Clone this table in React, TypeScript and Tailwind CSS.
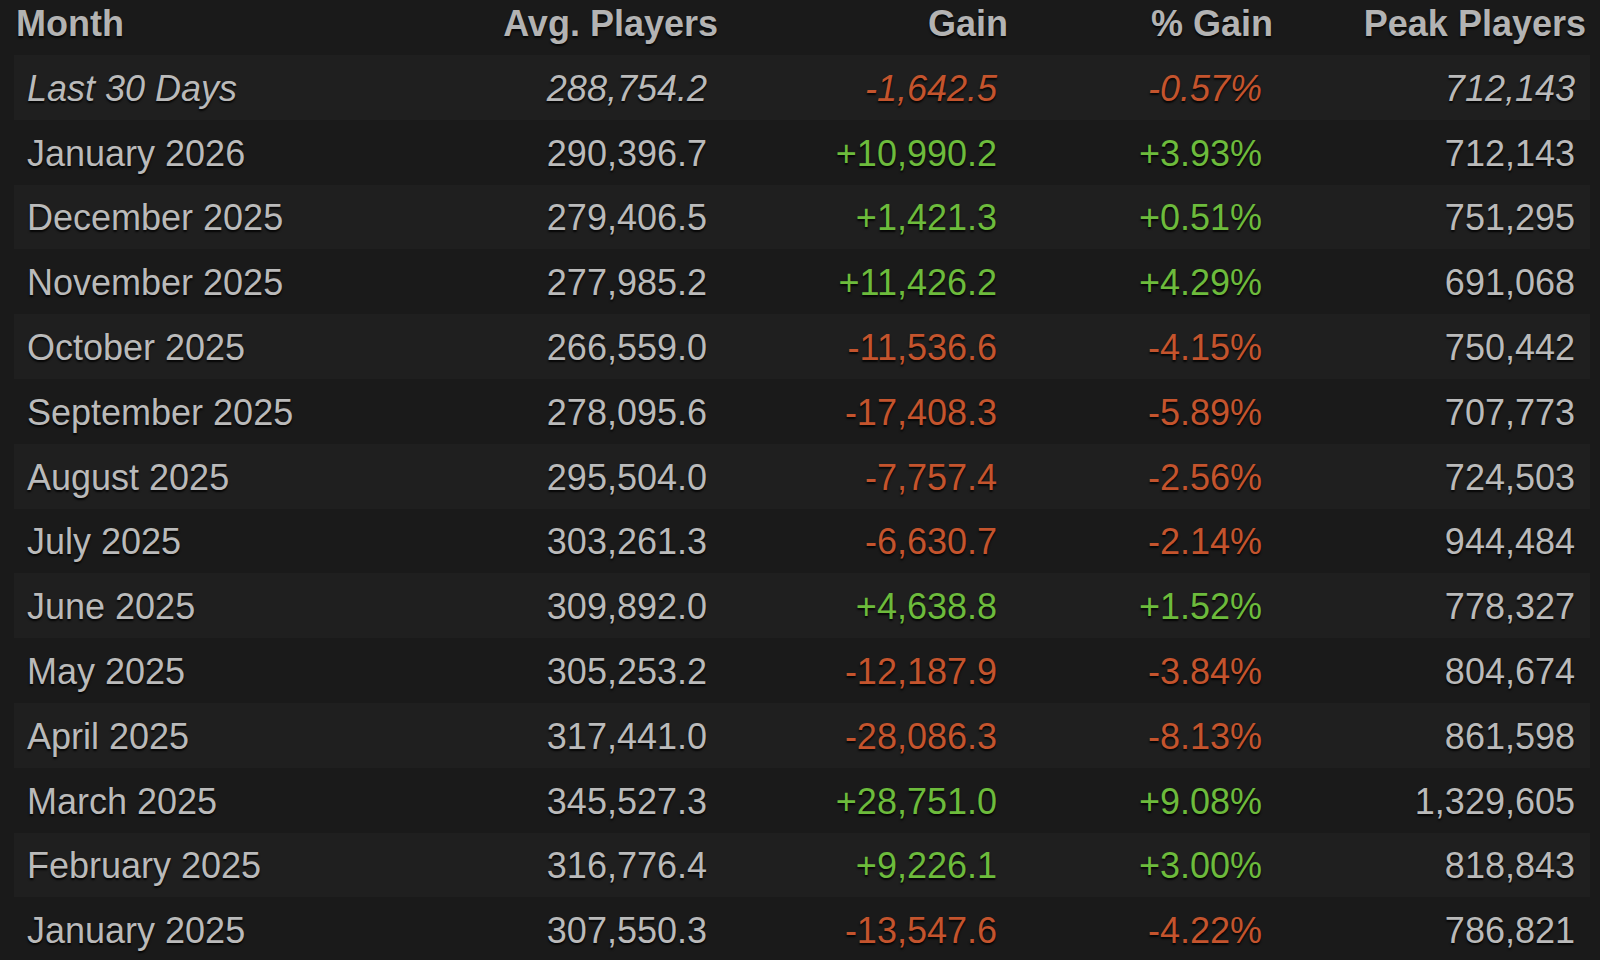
import React from "react";

type Row = { m: string; avg: string; gain: string; pct: string; peak: string };

const rows: Row[] = [
  { m: "Last 30 Days", avg: "288,754.2", gain: "-1,642.5", pct: "-0.57%", peak: "712,143" },
  { m: "January 2026", avg: "290,396.7", gain: "+10,990.2", pct: "+3.93%", peak: "712,143" },
  { m: "December 2025", avg: "279,406.5", gain: "+1,421.3", pct: "+0.51%", peak: "751,295" },
  { m: "November 2025", avg: "277,985.2", gain: "+11,426.2", pct: "+4.29%", peak: "691,068" },
  { m: "October 2025", avg: "266,559.0", gain: "-11,536.6", pct: "-4.15%", peak: "750,442" },
  { m: "September 2025", avg: "278,095.6", gain: "-17,408.3", pct: "-5.89%", peak: "707,773" },
  { m: "August 2025", avg: "295,504.0", gain: "-7,757.4", pct: "-2.56%", peak: "724,503" },
  { m: "July 2025", avg: "303,261.3", gain: "-6,630.7", pct: "-2.14%", peak: "944,484" },
  { m: "June 2025", avg: "309,892.0", gain: "+4,638.8", pct: "+1.52%", peak: "778,327" },
  { m: "May 2025", avg: "305,253.2", gain: "-12,187.9", pct: "-3.84%", peak: "804,674" },
  { m: "April 2025", avg: "317,441.0", gain: "-28,086.3", pct: "-8.13%", peak: "861,598" },
  { m: "March 2025", avg: "345,527.3", gain: "+28,751.0", pct: "+9.08%", peak: "1,329,605" },
  { m: "February 2025", avg: "316,776.4", gain: "+9,226.1", pct: "+3.00%", peak: "818,843" },
  { m: "January 2025", avg: "307,550.3", gain: "-13,547.6", pct: "-4.22%", peak: "786,821" },
];

const grid = "grid grid-cols-[407px_300px_290px_265px_313px] pr-[1px]";

export default function App() {
  return (
    <div
      className="w-[1600px] h-[960px] overflow-hidden bg-[#1a1a1a] pl-[14px] pr-[10px] text-[36px] leading-none [text-shadow:0_2px_2px_rgba(0,0,0,0.85)]"
      style={{ fontFamily: '"Liberation Sans", Arial, Helvetica, sans-serif' }}
    >
      <div className={`${grid} h-[55px] items-center pb-[8px] font-bold text-[#b3b3b3]`}>
        <div className="pl-[2px]">Month</div>
        <div className="text-right pr-[3px]">Avg. Players</div>
        <div className="text-right pr-[3px]">Gain</div>
        <div className="text-right pr-[3px]">% Gain</div>
        <div className="text-right pr-[3px]">Peak Players</div>
      </div>
      {rows.map((r, i) => {
        const neg = r.gain.startsWith("-");
        const color = neg ? "text-[#c4542d]" : "text-[#6dbb3c]";
        return (
          <div
            key={r.m}
            className={`${grid} h-[64.8px] items-center pt-[3px] text-[#bababa] ${
              i % 2 === 0 ? "bg-[#1f1f1f]" : "bg-[#1a1a1a]"
            } ${i === 0 ? "italic" : ""}`}
          >
            <div className="pl-[13px]">{r.m}</div>
            <div className="text-right pr-[14px]">{r.avg}</div>
            <div className={`text-right pr-[14px] ${color}`}>{r.gain}</div>
            <div className={`text-right pr-[14px] ${color}`}>{r.pct}</div>
            <div className="text-right pr-[14px]">{r.peak}</div>
          </div>
        );
      })}
    </div>
  );
}
